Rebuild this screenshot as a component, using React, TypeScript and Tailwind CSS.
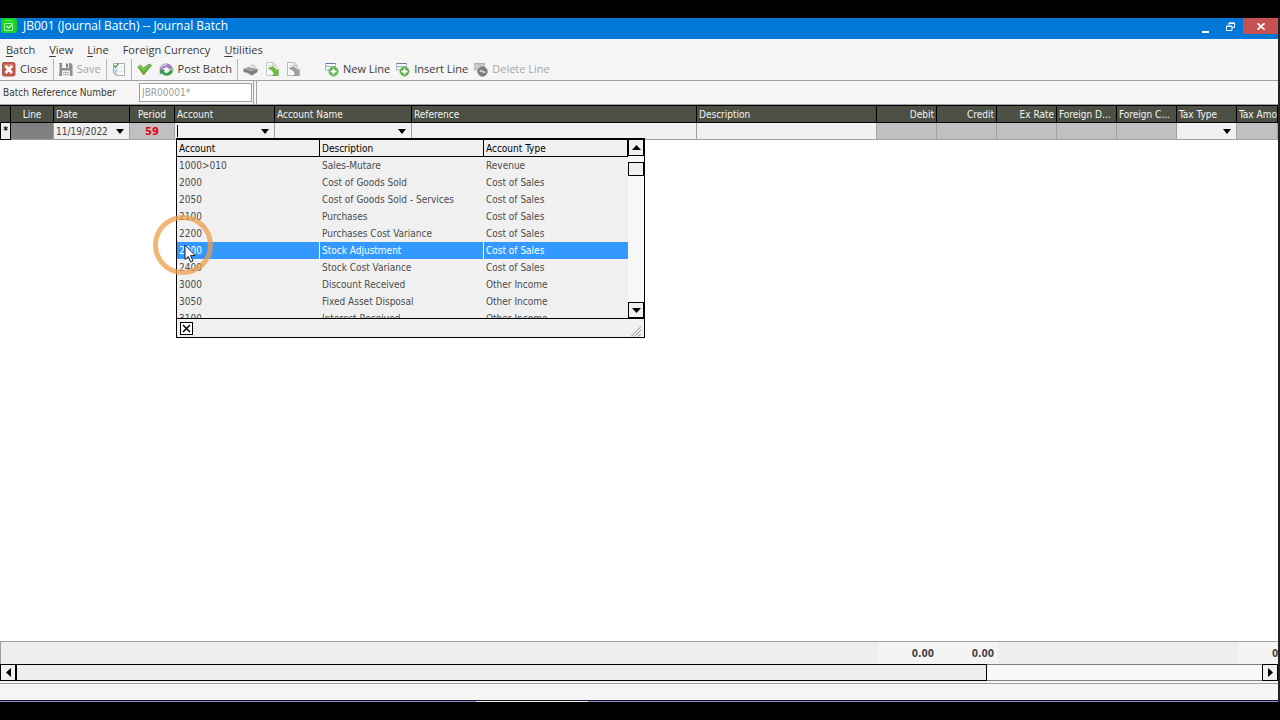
import React from "react";
import clsx from "clsx";

type Align = "left" | "center" | "right";

const columns: { label: string; width: string; align: Align }[] = [
  { label: "", width: "w-[11px]", align: "center" },
  { label: "Line", width: "w-[43px]", align: "center" },
  { label: "Date", width: "w-[76px]", align: "left" },
  { label: "Period", width: "w-[45px]", align: "center" },
  { label: "Account", width: "w-[100px]", align: "left" },
  { label: "Account Name", width: "w-[137px]", align: "left" },
  { label: "Reference", width: "w-[285px]", align: "left" },
  { label: "Description", width: "w-[180px]", align: "left" },
  { label: "Debit", width: "w-[60px]", align: "right" },
  { label: "Credit", width: "w-[60px]", align: "right" },
  { label: "Ex Rate", width: "w-[60px]", align: "right" },
  { label: "Foreign D...", width: "w-[60px]", align: "left" },
  { label: "Foreign C...", width: "w-[60px]", align: "left" },
  { label: "Tax Type", width: "w-[60px]", align: "left" },
  { label: "Tax Amo", width: "w-auto", align: "left" },
];

const accounts = [
  ["1000>010", "Sales-Mutare", "Revenue"],
  ["2000", "Cost of Goods Sold", "Cost of Sales"],
  ["2050", "Cost of Goods Sold - Services", "Cost of Sales"],
  ["2100", "Purchases", "Cost of Sales"],
  ["2200", "Purchases Cost Variance", "Cost of Sales"],
  ["2300", "Stock Adjustment", "Cost of Sales"],
  ["2400", "Stock Cost Variance", "Cost of Sales"],
  ["3000", "Discount Received", "Other Income"],
  ["3050", "Fixed Asset Disposal", "Other Income"],
  ["3100", "Interest Received", "Other Income"],
];

const menus = [
  { key: "B", rest: "atch" },
  { key: "V", rest: "iew" },
  { key: "L", rest: "ine" },
  { key: "", rest: "Foreign Currency" },
  { key: "U", rest: "tilities" },
];

const alignClass: Record<Align, string> = {
  left: "text-left",
  center: "text-center",
  right: "text-right",
};

const hatch =
  "bg-[repeating-conic-gradient(#ffffff_0_25%,#f1f1f1_0_50%)] bg-[length:2px_2px]";

function Arrow({ dir }: { dir: "up" | "down" | "left" | "right" }) {
  const d = {
    up: "M4.5 2 9 7H0z",
    down: "M0 2h9L4.5 7z",
    left: "M2 4.5 7 0v9z",
    right: "M7 4.5 2 0v9z",
  }[dir];
  return (
    <svg width="9" height="9" viewBox="0 0 9 9" aria-hidden="true">
      <path d={d} fill="#000" />
    </svg>
  );
}

function DropArrow() {
  return (
    <svg width="8" height="5" viewBox="0 0 8 5" aria-hidden="true">
      <path d="M0 0h8L4 5z" fill="#000" />
    </svg>
  );
}

function AppIcon() {
  return (
    <svg width="16" height="16" viewBox="0 0 16 16" aria-hidden="true">
      <rect width="16" height="15" rx="3" fill="#16d326" />
      <path d="M4.500 5.500h7M3.500 5v7.500h8V7" fill="none" stroke="#a9f5a4" />
      <path d="M4 2.500h6l2 1.500" fill="none" stroke="#5bea5b" />
      <path d="m5.500 8 2 2 4-3.500" fill="none" stroke="#d5ffd0" strokeWidth="1.200" />
    </svg>
  );
}

function CloseIcon() {
  return (
    <svg width="14" height="15" viewBox="0 0 14 15" aria-hidden="true">
      <rect x=".5" y=".5" width="12.500" height="13.500" rx="1.500" fill="#c95448" stroke="#a8574e" />
      <path d="M2 2h9.500v4H2z" fill="#d8786c" />
      <path d="m3.500 4 6.500 7M10 4l-6.500 7" stroke="#fff" strokeWidth="2.600" />
    </svg>
  );
}

function SaveIcon() {
  return (
    <svg width="14" height="15" viewBox="0 0 14 15" aria-hidden="true">
      <path d="M0 1h12l1.500 2v11H0z" fill="#8e8e8e" />
      <path d="M3 1h7v5H3z" fill="#f4f4f4" />
      <path d="M7 1.500h2v4H7z" fill="#7d7d7d" />
      <path d="M3 8.500h8V14H3z" fill="#efefef" />
      <path d="M4 10.500h6M4 12.500h6" stroke="#b5b5b5" />
      <path d="M.5 2v10" stroke="#c4c4c4" />
    </svg>
  );
}

function ChecklistIcon() {
  return (
    <svg width="14" height="15" viewBox="0 0 14 15" aria-hidden="true">
      <path d="M1.500 1.500h11v12h-8l-3-2.500z" fill="#fafafa" stroke="#a9acae" />
      <path d="M1.500 11h3v2.500" fill="none" stroke="#a9acae" />
      <path d="m2 3.500 1.500 2L6.500 1.500" fill="none" stroke="#4d9b62" strokeWidth="1.300" />
      <path d="M3 7.500h2v2H3z" fill="none" stroke="#9fc7d6" />
      <path d="M7.500 5.500h3M7 9h4" stroke="#d9dcde" />
    </svg>
  );
}

function TickIcon() {
  return (
    <svg width="15" height="13" viewBox="0 0 15 13" aria-hidden="true">
      <path d="m.8 3.800 2.800-1.800 2.800 3.200L12 1l2.500 1.300L6.600 12z" fill="#5db136" stroke="#4c8f2d" strokeWidth=".7" />
      <path d="m2 4 1.500-.8 2.800 4L12 2" fill="none" stroke="#a3dc80" strokeWidth=".9" />
    </svg>
  );
}

function PostIcon() {
  return (
    <svg width="15" height="15" viewBox="0 0 15 15" aria-hidden="true">
      <path d="M.8 9C-.2 4.600 3.800 1.200 8 1.600c3 .3 5 2.200 5.800 4.600l-3.600 1.300C9.400 5 5.400 4.200 4.300 7.600z" fill="#9b82bd" />
      <path d="M2 6.200c1.200-2.800 3.500-3.600 6-3.400" fill="none" stroke="#d5c8e4" strokeWidth="1.300" />
      <path d="M14.200 7.500c0 3.800-3 6.400-6.700 6.200-2.200-.2-4-1.100-5-2.500L.8 12.400V8h5.400L4.900 9.800c1.600 1.900 4.800 1.200 5.600-1z" fill="#3e9b55" />
      <path d="m14.500 6-5.300 2.400 5 .9z" fill="#7cc287" />
    </svg>
  );
}

function PrinterIcon() {
  return (
    <svg width="15" height="12" viewBox="0 0 15 12" aria-hidden="true">
      <path d="m5 4 4-3.500 3.500 1.500L10 5z" fill="#e9e9e9" stroke="#b0b0b0" strokeWidth=".6" />
      <path d="M.5 5 5 3.500 14.500 5v3L9 11.500.5 8z" fill="#7c7c7c" />
      <path d="M.5 5 5 3.500 14.500 5 9 7.500z" fill="#a0a0a0" />
      <path d="m2.500 8 5 2.200-1.500 1L1.500 9z" fill="#e2e2e2" />
    </svg>
  );
}

// page with an arrow curving down to the lower right
function PageArrowIcon({ muted = false }: { muted?: boolean }) {
  return (
    <svg width="14" height="15" viewBox="0 0 14 15" aria-hidden="true">
      <path d="M1.500.5h6.500l3 3v10h-9.500z" fill="#f8f8f8" stroke={muted ? "#b9b9b9" : "#c2c8bd"} />
      <path d="M8 .5v3h3" fill="none" stroke={muted ? "#b9b9b9" : "#c2c8bd"} />
      <path d="M3.500 3.500h3M3.500 5.500h4" stroke="#d0d0d0" />
      <path
        d="M3.500 6.500 8 4.500l3.500 4 1.800-1.300v6.300H7.500l1.800-1.800C7.500 8.500 6.500 7.500 3.500 6.500z"
        fill={muted ? "#9d9d9d" : "#6cc03c"}
        stroke={muted ? "#8b8b8b" : "#559e2f"}
        strokeWidth=".6"
      />
    </svg>
  );
}

function LineIcon({ kind }: { kind: "add" | "delete" }) {
  const add = kind === "add";
  return (
    <svg width="14" height="15" viewBox="0 0 14 15" aria-hidden="true">
      <path d="M.5 1.500h10v6.500H.5z" fill={add ? "#f7fafc" : "#c4c4c4"} stroke={add ? "#a9b8c4" : "#bcbcbc"} />
      <path d="M.5 1.500h10" stroke={add ? "#62809b" : "#b0b0b0"} />
      <path d="M.5 4.500h10" stroke={add ? "#8fb1c8" : "#d6d6d6"} />
      <circle cx="8.500" cy="9.500" r="4.700" fill={add ? "#54ab45" : "#7e7e7e"} stroke={add ? "#8dcb80" : "#6f6f6f"} strokeWidth=".8" />
      {add ? (
        <path d="M8.500 6.500v6M5.500 9.500h6" stroke="#fff" strokeWidth="1.800" />
      ) : (
        <path d="m5.700 8.500 5.600 2" stroke="#dcdcdc" strokeWidth="1.800" />
      )}
    </svg>
  );
}

function ToolButton({
  label,
  name,
  disabled,
  children,
}: {
  label?: string;
  name?: string;
  disabled?: boolean;
  children: React.ReactNode;
}) {
  return (
    <button
      type="button"
      aria-label={name}
      disabled={disabled}
      className={clsx("flex h-full items-center gap-1", disabled ? "text-[#a6a6a6]" : "text-[#3a3a3a]")}
    >
      {children}
      {label && <span>{label}</span>}
    </button>
  );
}

function Separator() {
  return <span className="h-full w-px bg-[#b4b4b4]" />;
}

function TitleBar() {
  return (
    <header className="flex h-[21px] shrink-0 items-center bg-[#0078d7] text-white">
      <div className="flex flex-1 items-center gap-[6px] px-px pb-[5px]">
        <AppIcon />
        <h1 className="text-[12px] leading-4">JB001 (Journal Batch) -- Journal Batch</h1>
      </div>
      <button type="button" aria-label="Minimize" className="flex h-full w-[25px] items-center justify-center">
        <svg width="7" height="11" viewBox="0 0 7 11">
          <path d="M0 9h7" stroke="#fff" strokeWidth="2" />
        </svg>
      </button>
      <button type="button" aria-label="Restore" className="flex h-full w-[25px] justify-center pt-1">
        <svg width="9" height="9" viewBox="0 0 9 9" fill="none" stroke="#fff">
          <path d="M3 3V.8h5.500V5.500H6.500M3 1.500h5.500" />
          <path d="M.5 4h5.500v4.500H.5zM.5 4.500h5.500" />
        </svg>
      </button>
      <button
        type="button"
        aria-label="Close window"
        className="flex h-4 w-[35px] items-center justify-center self-start bg-[#c75050]"
      >
        <svg width="8" height="7" viewBox="0 0 8 7">
          <path d="m.5.3 7 6.400M7.500.3l-7 6.400" stroke="#fff" strokeWidth="1.700" />
        </svg>
      </button>
    </header>
  );
}

function MenuBar() {
  return (
    <nav className="flex h-5 shrink-0 items-center gap-[14px] px-[6px] pt-[2px] text-[11px] text-[#3a3a3a]">
      {menus.map((m) => (
        <button type="button" key={m.rest}>
          {m.key && <span className="underline underline-offset-2">{m.key}</span>}
          {m.rest}
        </button>
      ))}
    </nav>
  );
}

function ToolBar() {
  return (
    <div className="flex h-[22px] shrink-0 items-center gap-[5px] border-b border-[#a0a0a0] px-[2px] text-[11px]">
      <ToolButton label="Close"><CloseIcon /></ToolButton>
      <Separator />
      <ToolButton label="Save" disabled><SaveIcon /></ToolButton>
      <Separator />
      <ToolButton name="Batch details"><ChecklistIcon /></ToolButton>
      <Separator />
      <div className="flex h-full items-center gap-[7px]">
        <ToolButton name="Validate"><TickIcon /></ToolButton>
        <ToolButton label="Post Batch"><PostIcon /></ToolButton>
      </div>
      <Separator />
      <div className="flex h-full items-center gap-[7px]">
        <ToolButton name="Print"><PrinterIcon /></ToolButton>
        <ToolButton name="Import"><PageArrowIcon /></ToolButton>
        <ToolButton name="Export"><PageArrowIcon muted /></ToolButton>
      </div>
      <div className="ml-5 flex h-full items-center gap-[6px]">
        <ToolButton label="New Line"><LineIcon kind="add" /></ToolButton>
        <ToolButton label="Insert Line"><LineIcon kind="add" /></ToolButton>
        <ToolButton label="Delete Line" disabled><LineIcon kind="delete" /></ToolButton>
      </div>
    </div>
  );
}

function ReferenceBar() {
  return (
    <div className="flex h-[23px] shrink-0 items-stretch font-['DejaVu_Sans_Condensed','DejaVu_Sans',sans-serif] text-[10px]">
      <div className="flex w-[254px] items-center border-r border-[#a0a0a0]">
        <label htmlFor="batch-ref" className="w-[139px] pl-[3px] text-[#3a3a3a]">
          Batch Reference Number
        </label>
        <input
          id="batch-ref"
          readOnly
          defaultValue="JBR00001*"
          className="h-[19px] w-[113px] border border-[#a0a0a0] bg-white px-[2px] text-[#9a9a9a] outline-none"
        />
      </div>
      <div className="ml-[2px] flex-1 border-l border-[#a0a0a0]" />
    </div>
  );
}

function Columns() {
  return (
    <colgroup>
      {columns.map((c, i) => (
        <col key={i} className={c.width} />
      ))}
    </colgroup>
  );
}

function Pointer() {
  return (
    <>
      <span className="pointer-events-none absolute -left-[24px] top-[75px] size-[60px] rounded-full border-[5px] border-[#ec9f4c]/75" />
      <svg
        className="pointer-events-none absolute left-[7px] top-[104px]"
        width="13"
        height="20"
        viewBox="0 0 13 20"
        aria-hidden="true"
      >
        <path d="M1 1v14.500l3.300-3.100 2.400 5.600 2.300-1-2.400-5.400h4.600z" fill="#fff" stroke="#222" strokeWidth="1" />
      </svg>
    </>
  );
}

function AccountDropdown() {
  return (
    <div className="absolute left-px top-[15px] z-10 w-[469px] border border-black border-t-2 bg-[#f0f0f0] text-[10px]">
      <div className="flex h-[178px] overflow-hidden">
        <div className="flex-1 overflow-hidden">
          <table className="w-full table-fixed border-separate border-spacing-0 text-left text-[#4c4c4c]">
            <colgroup>
              <col className="w-[143px]" />
              <col className="w-[164px]" />
              <col className="w-auto" />
            </colgroup>
            <thead className="text-black">
              <tr>
                {["Account", "Description", "Account Type"].map((h) => (
                  <th key={h} className="h-[17px] border-r border-b border-black p-0 pt-[2px] pl-[2px] leading-[14px] font-normal">
                    {h}
                  </th>
                ))}
              </tr>
            </thead>
            <tbody>
              {accounts.map((row) => {
                const selected = row[0] === "2300";
                return (
                  <tr key={row[0]} className={clsx(selected && "bg-[#3399ff] text-white")}>
                    {row.map((text, i) => (
                      <td
                        key={i}
                        className={clsx(
                          "h-[17px] border-r p-0 pl-[2px] leading-4",
                          selected && i < 2 ? "border-white" : "border-transparent"
                        )}
                      >
                        {text}
                      </td>
                    ))}
                  </tr>
                );
              })}
            </tbody>
          </table>
        </div>
        <div className={clsx("flex w-4 flex-col", hatch)}>
          <button type="button" aria-label="Scroll up" className="flex h-4 items-center justify-center border border-t-0 border-black bg-[#f0f0f0]">
            <Arrow dir="up" />
          </button>
          <div className="mt-[6px] h-[14px] border border-black bg-[#f0f0f0]" />
          <button type="button" aria-label="Scroll down" className="mt-auto flex h-4 items-center justify-center border border-black bg-[#f0f0f0]">
            <Arrow dir="down" />
          </button>
        </div>
      </div>
      <div className="flex h-[19px] items-center justify-between border-t border-black px-[3px]">
        <button type="button" aria-label="Close list" className="flex size-[13px] items-center justify-center border border-black bg-white">
          <svg width="9" height="9" viewBox="0 0 9 9">
            <path d="m1 1 7 7M8 1 1 8" stroke="#000" strokeWidth="1.500" />
          </svg>
        </button>
        <svg width="10" height="11" viewBox="0 0 10 11" className="self-end" aria-hidden="true">
          <path d="M0 10.500 10 .5M3.500 10.500 10 4M7 10.500l3-3" stroke="#8a8a8a" />
        </svg>
      </div>
      <Pointer />
    </div>
  );
}

const cell = "h-[17px] border-r border-b border-[#a0a0a0] p-0";

function JournalGrid() {
  return (
    <main className="min-h-0 flex-1 overflow-hidden border-t border-[#a0a0a0] bg-white">
      <table className="w-full min-w-[1278px] table-fixed border-separate border-spacing-0 border-t border-black text-[10px]">
        <Columns />
        <thead>
          <tr className="bg-[#4c5044] text-[#f4f4f4]">
            {columns.map((c, i) => (
              <th
                key={i}
                className={clsx(
                  "h-[17px] overflow-hidden border-r border-b border-black p-0 px-[2px] pt-[2px] leading-[14px] font-normal whitespace-nowrap",
                  alignClass[c.align]
                )}
              >
                {c.label}
              </th>
            ))}
          </tr>
        </thead>
        <tbody>
          <tr className="bg-[#f0f0f0] text-[#444]">
            <td className="h-[17px] border border-t-0 border-black p-0 text-center leading-4 font-bold text-black">*</td>
            <td className={clsx(cell, "bg-[#808080]")} />
            <td className={cell}>
              <div className="flex items-center">
                <input
                  aria-label="Date"
                  defaultValue="11/19/2022"
                  className="h-4 w-[62px] bg-transparent pl-[2px] outline-none"
                />
                <button type="button" aria-label="Pick date"><DropArrow /></button>
              </div>
            </td>
            <td className={clsx(cell, "bg-[#c0c0c0] pt-px text-center text-[11px] leading-[15px] font-bold text-[#e00010]")}>59</td>
            <td className={clsx(cell, "relative")}>
              <div className="flex h-4 items-center">
                <span className="ml-[2px] h-3 w-px bg-black" />
                <input aria-label="Account" className="h-4 w-[83px] bg-transparent outline-none" />
                <button type="button" aria-label="Choose account"><DropArrow /></button>
              </div>
              <AccountDropdown />
            </td>
            <td className={cell}>
              <div className="flex h-4 items-center">
                <input aria-label="Account name" className="h-4 w-[123px] bg-transparent outline-none" />
                <button type="button" aria-label="Choose account name"><DropArrow /></button>
              </div>
            </td>
            <td className={cell} />
            <td className={cell} />
            {["debit", "credit", "rate", "fdebit", "fcredit"].map((k) => (
              <td key={k} className={clsx(cell, "bg-[#c0c0c0]")} />
            ))}
            <td className={cell}>
              <button type="button" aria-label="Choose tax type" className="flex h-4 w-full items-center pl-[46px]">
                <DropArrow />
              </button>
            </td>
            <td className={clsx(cell, "bg-[#c0c0c0]")} />
          </tr>
        </tbody>
      </table>
    </main>
  );
}

function Totals() {
  const total = "bg-[#f4f4f4] p-0 pr-1 text-right";
  return (
    <div className="shrink-0 overflow-hidden border-t border-l border-[#a0a0a0] bg-[#eeeeee]">
      <table className="w-full min-w-[1277px] table-fixed border-separate border-spacing-0 text-[10px] font-bold text-[#444]">
        <Columns />
        <tbody>
          <tr>
            <td colSpan={8} className="h-[22px] p-0" />
            <td className={total}>0.00</td>
            <td className={total}>0.00</td>
            <td colSpan={4} className="p-0" />
            <td className="overflow-hidden bg-[#f4f4f4] p-0 pl-[34px] text-clip whitespace-nowrap">0</td>
          </tr>
        </tbody>
      </table>
    </div>
  );
}

function HorizontalScroll() {
  return (
    <div className={clsx("flex h-[17px] shrink-0 border-y border-[#808080]", hatch)}>
      <button type="button" aria-label="Scroll left" className="-my-px flex w-4 items-center justify-center border border-black bg-[#f0f0f0]">
        <Arrow dir="left" />
      </button>
      <div className="-my-px w-[76%] border border-black bg-[#eeeeee]" />
      <button type="button" aria-label="Scroll right" className="-my-px ml-auto flex w-4 items-center justify-center border border-black bg-[#f0f0f0]">
        <Arrow dir="right" />
      </button>
    </div>
  );
}

export default function App() {
  return (
    <div className="flex h-screen flex-col bg-black pt-[18px] pb-[18px] font-['Open_Sans','Noto_Sans',sans-serif]">
      <div className="flex min-h-0 flex-1 flex-col border-r-2 border-[#222] bg-[#f5f5f5]">
        <TitleBar />
        <MenuBar />
        <ToolBar />
        <ReferenceBar />
        <div className="flex min-h-0 flex-1 flex-col font-['DejaVu_Sans_Condensed','DejaVu_Sans',sans-serif]">
          <JournalGrid />
          <Totals />
          <HorizontalScroll />
        </div>
        <footer className="mt-[2px] flex h-[19px] shrink-0 items-end border-t border-[#a0a0a0]">
          <div className="flex h-[2px] w-full justify-center border-t border-[#15152e] bg-[#8a8fc0] pr-[214px]">
            <span className="h-px w-[112px] bg-[#e8eddc]" />
          </div>
        </footer>
      </div>
    </div>
  );
}
